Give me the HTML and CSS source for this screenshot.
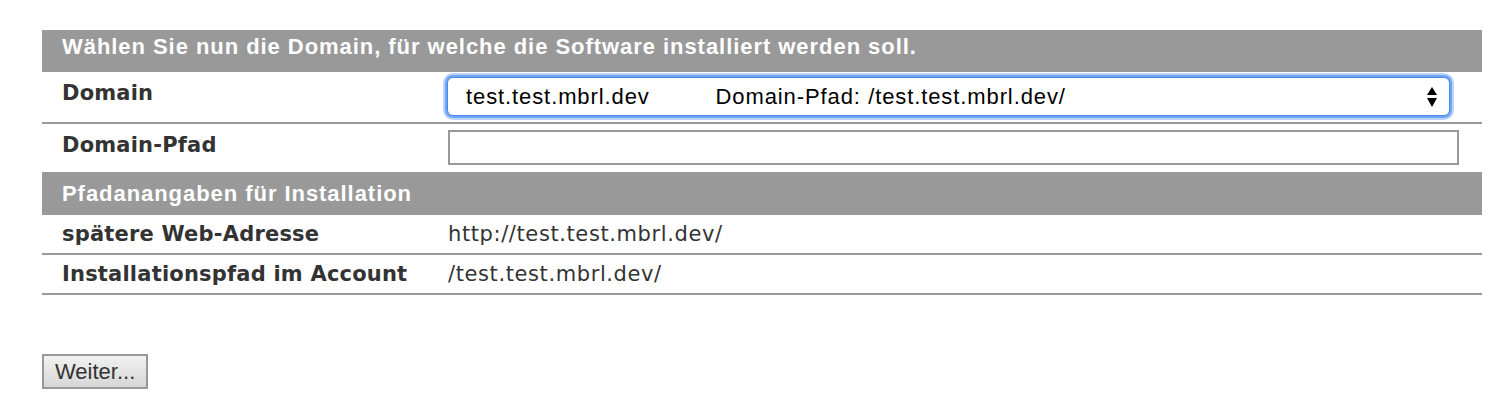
FILE: index.html
```html
<!DOCTYPE html>
<html lang="de">
<head>
  <meta charset="UTF-8">
  <title>Installation</title>
  <link rel="stylesheet" href="styles.css">
</head>
<body>
  <form class="install-form">
    <table class="install-table">
      <tr class="section first">
        <th colspan="2">Wählen Sie nun die Domain, für welche die Software installiert werden soll.</th>
      </tr>
      <tr class="field line">
        <td class="label">Domain</td>
        <td class="value">
          <div class="select-wrap">
            <select class="domain-select">
              <option>test.test.mbrl.dev&nbsp;&nbsp;&nbsp;&nbsp;&nbsp;&nbsp;&nbsp;&nbsp;&nbsp;Domain-Pfad: /test.test.mbrl.dev/</option>
            </select>
            <svg class="select-arrows" width="10" height="20" viewBox="0 0 10 20">
              <path d="M5 0 L10 8 L0 8 Z" fill="#000"/>
              <path d="M0 11 L10 11 L5 20 Z" fill="#000"/>
            </svg>
          </div>
        </td>
      </tr>
      <tr class="field">
        <td class="label">Domain-Pfad</td>
        <td class="value"><input type="text" class="path-input"></td>
      </tr>
      <tr class="section">
        <th colspan="2">Pfadanangaben für Installation</th>
      </tr>
      <tr class="info line">
        <td class="label">spätere Web-Adresse</td>
        <td class="value">http://test.test.mbrl.dev/</td>
      </tr>
      <tr class="info line">
        <td class="label">Installationspfad im Account</td>
        <td class="value">/test.test.mbrl.dev/</td>
      </tr>
    </table>

    <button type="button" class="next-button">Weiter...</button>
  </form>
</body>
</html>
```

FILE: styles.css
```css
body {
  margin: 0;
  padding: 30px 28px 0 42px;
  background: #fff;
  color: #333;
  font-family: "DejaVu Sans", Verdana, sans-serif;
}

.install-table {
  width: 1440px;
  border-collapse: collapse;
}

/* graue Abschnittsköpfe */
.section th {
  height: 25px;
  padding: 9px 20px;
  background: #999;
  color: #fff;
  font-family: "Liberation Sans", Arial, sans-serif;
  font-size: 22px;
  font-weight: bold;
  letter-spacing: 0.95px;
  line-height: 25px;
  text-align: left;
  vertical-align: top;
}

.section.first th {
  height: 25px;
  padding: 4px 20px 13px 20px;
}

.label {
  width: 386px;
  padding: 0 0 0 20px;
  font-size: 21px;
  font-weight: bold;
  letter-spacing: 0.2px;
  line-height: 24px;
  color: #333;
  vertical-align: top;
}

.value {
  padding: 0 22px 0 0;
  font-size: 21px;
  letter-spacing: 0.6px;
  line-height: 24px;
  color: #333;
  vertical-align: top;
}

.line td {
  border-bottom: 2px solid #999;
}

.field .label {
  padding-top: 9px;
}

.field.line td {
  height: 50px;
}

.field.line .label {
  height: 41px;
}

.field td {
  height: 48px;
}

.field .label {
  height: 39px;
}

.info td {
  height: 38px;
  vertical-align: middle;
}

.select-wrap {
  position: relative;
  width: 1003px;
  margin: 5px 0 0 -1px;
}

.domain-select {
  -webkit-appearance: none;
  appearance: none;
  display: block;
  box-sizing: border-box;
  width: 100%;
  height: 39px;
  margin: 0;
  padding: 0 0 0 18px;
  border: 1px solid #4a89ea;
  border-radius: 6px;
  box-shadow: 0 0 0 2px #6fa5f3, 0 0 0 4px rgba(128, 176, 246, 0.55);
  background: #fff;
  color: #000;
  font-family: "Liberation Sans", Arial, sans-serif;
  font-size: 22px;
  letter-spacing: 0.9px;
  word-spacing: 0.3px;
  outline: none;
}

.select-arrows {
  position: absolute;
  top: 10px;
  right: 13px;
  pointer-events: none;
}

.path-input {
  display: block;
  box-sizing: border-box;
  width: 1011px;
  height: 35px;
  margin: 6px 0 0 0;
  border: 2px solid #999;
  background: #fff;
  font-size: 20px;
}

.next-button {
  margin-top: 59px;
  padding: 3px 11px 3px 11px;
  border: 2px solid #999;
  background: linear-gradient(#f2f2f2, #d6d6d6);
  color: #333;
  font-family: "Liberation Sans", Arial, sans-serif;
  font-size: 22px;
  line-height: 25px;
}
```
